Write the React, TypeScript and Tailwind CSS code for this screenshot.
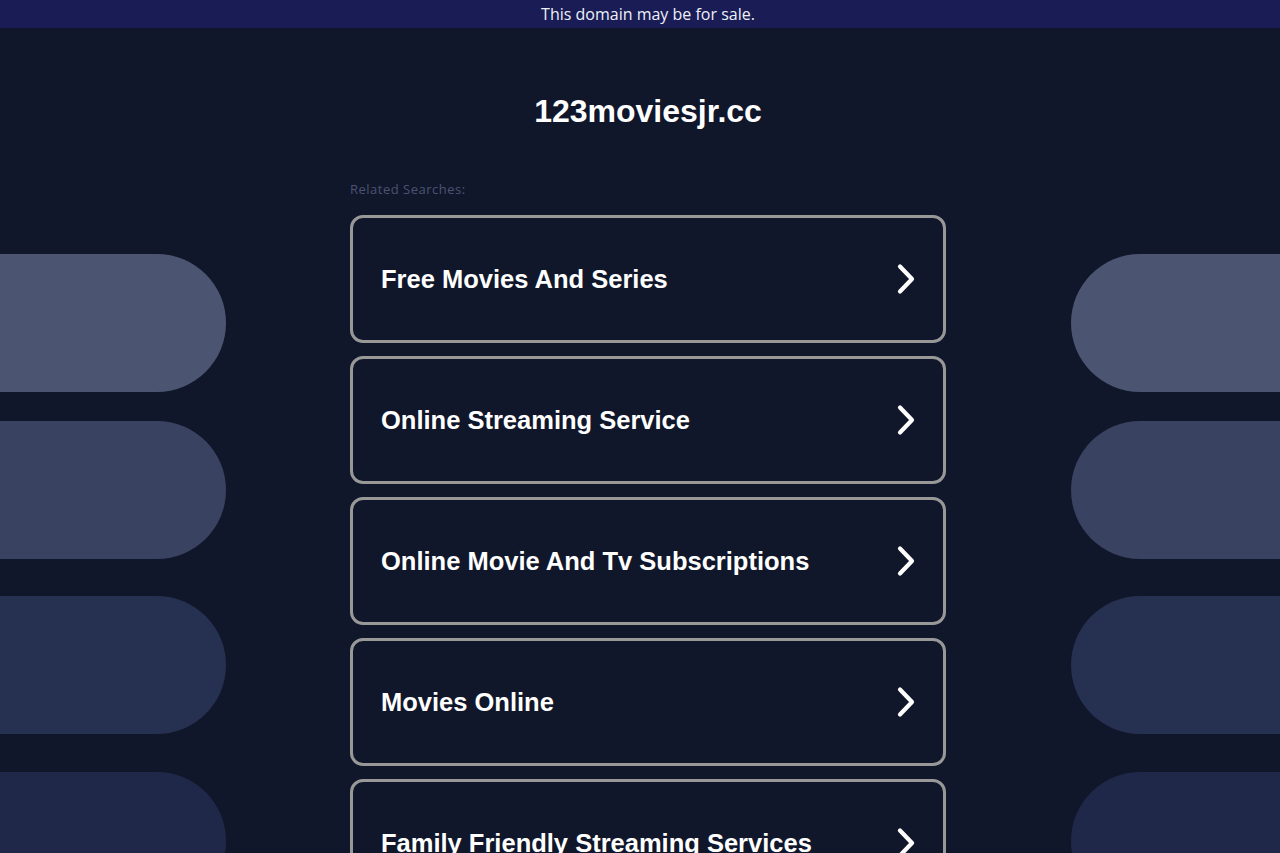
import React from 'react';

const searches = [
  'Free Movies And Series',
  'Online Streaming Service',
  'Online Movie And Tv Subscriptions',
  'Movies Online',
  'Family Friendly Streaming Services',
];

const Chevron = () => (
  <svg width="24" height="32" viewBox="0 0 24 32" fill="none">
    <path d="M6 3.5 L18 16 L6 28.5" stroke="white" strokeWidth="4.2" strokeLinecap="round" strokeLinejoin="round" />
  </svg>
);

const SidePills = ({ side }: { side: 'left' | 'right' }) => {
  const round = side === 'left' ? 'rounded-r-[69px]' : 'rounded-l-[69px]';
  return (
    <div className="flex flex-col pt-[226px]">
      <div className={`h-[138px] bg-[#4b5571] ${round}`} />
      <div className={`mt-[29px] h-[138px] bg-[#394261] ${round}`} />
      <div className={`mt-[37px] h-[138px] bg-[#263050] ${round}`} />
      <div className={`mt-[38px] h-[138px] bg-[#1f2849] ${round}`} />
    </div>
  );
};

const App = () => {
  return (
    <div className="h-[853px] overflow-hidden bg-[#11172a] font-['Liberation_Sans',Arial,sans-serif]">
      <div className="h-[28px] bg-[#191c55] flex items-center justify-center pl-[16px]">
        <span className="text-[16px] font-medium text-[#eef0f8] font-['Open_Sans',sans-serif]">
          This domain may be for sale.
        </span>
      </div>

      <div className="flex">
        <div className="w-[226px] shrink-0">
          <SidePills side="left" />
        </div>

        <div className="ml-[124px] w-[596px] shrink-0">
          <h1 className="mt-[65px] text-center text-[32px] leading-[36px] font-bold text-white">
            123moviesjr.cc
          </h1>
          <p className="mt-[52px] text-[13px] leading-[16px] tracking-[0.5px] text-[#4a5373] font-['Open_Sans',sans-serif]">
            Related Searches:
          </p>
          <div className="mt-[18px] flex flex-col gap-[13px]">
            {searches.map((s) => (
              <div
                key={s}
                className="h-[128px] border-[3px] border-[#989898] rounded-[13px] flex items-center justify-between pl-[28px] pr-[25px]"
              >
                <span className="text-[25.5px] font-bold text-white">{s}</span>
                <Chevron />
              </div>
            ))}
          </div>
        </div>

        <div className="ml-[125px] flex-1">
          <SidePills side="right" />
        </div>
      </div>
    </div>
  );
};

export default App;
